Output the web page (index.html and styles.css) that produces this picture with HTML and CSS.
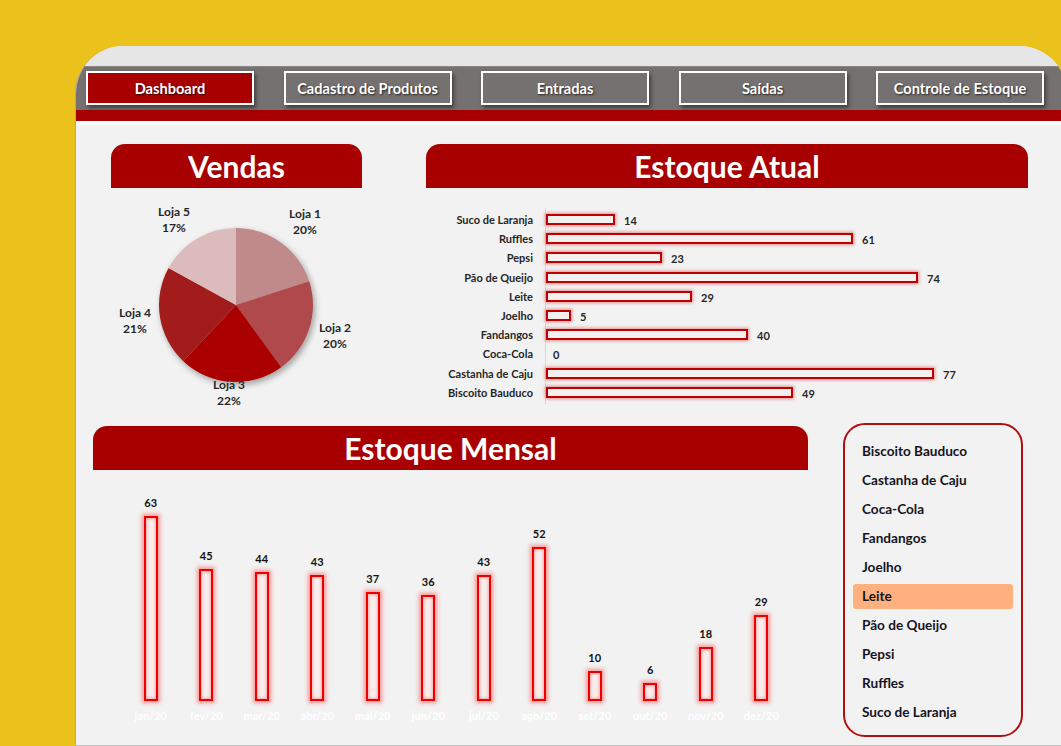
FILE: index.html
```html
<!DOCTYPE html>
<html lang="pt-BR">
<head>
<meta charset="utf-8">
<title>Dashboard</title>
<link rel="stylesheet" href="styles.css">
</head>
<body>
<div class="card">
  <div class="topstrip"></div>
  <nav class="nav">
    <div class="btn active">Dashboard</div>
    <div class="btn">Cadastro de Produtos</div>
    <div class="btn">Entradas</div>
    <div class="btn">Saídas</div>
    <div class="btn">Controle de Estoque</div>
  </nav>
  <div class="redstrip"></div>
  <main class="content">
    <div class="row1">
      <section class="panel vendas">
        <h2 class="title">Vendas</h2>
        <svg class="pie" width="251" height="230" viewBox="0 0 251 230">
          <defs>
            <filter id="sh" x="-20%" y="-20%" width="140%" height="140%">
              <feDropShadow dx="2" dy="3" stdDeviation="3" flood-color="#000" flood-opacity="0.35"/>
            </filter>
          </defs>
          <g filter="url(#sh)">
            <path d="M125,117 L125,40 A77,77 0 0 1 198.23,93.21 Z" fill="#c08a8a"/>
            <path d="M125,117 L198.23,93.21 A77,77 0 0 1 170.26,179.29 Z" fill="#b04a4b"/>
            <path d="M125,117 L170.26,179.29 A77,77 0 0 1 72.29,173.13 Z" fill="#aa0000"/>
            <path d="M125,117 L72.29,173.13 A77,77 0 0 1 57.52,79.90 Z" fill="#a31c1c"/>
            <path d="M125,117 L57.52,79.90 A77,77 0 0 1 125,40 Z" fill="#dbbbbc"/>
          </g>
          <g class="pielbl">
            <text x="194" y="30">Loja 1</text><text x="194" y="46">20%</text>
            <text x="224" y="144">Loja 2</text><text x="224" y="160">20%</text>
            <text x="118" y="201">Loja 3</text><text x="118" y="217">22%</text>
            <text x="24" y="129">Loja 4</text><text x="24" y="145">21%</text>
            <text x="63" y="28">Loja 5</text><text x="63" y="44">17%</text>
          </g>
        </svg>
      </section>
      <section class="panel atual">
        <h2 class="title">Estoque Atual</h2>
        <div class="hchart">
          <div class="hlabels">
            <div class="hl">Suco de Laranja</div>
            <div class="hl">Ruffles</div>
            <div class="hl">Pepsi</div>
            <div class="hl">Pão de Queijo</div>
            <div class="hl">Leite</div>
            <div class="hl">Joelho</div>
            <div class="hl">Fandangos</div>
            <div class="hl">Coca-Cola</div>
            <div class="hl">Castanha de Caju</div>
            <div class="hl">Biscoito Bauduco</div>
          </div>
          <div class="hbars">
            <div class="hrow"><div class="hbar" style="width:69px"></div><span class="hv">14</span></div>
            <div class="hrow"><div class="hbar" style="width:307px"></div><span class="hv">61</span></div>
            <div class="hrow"><div class="hbar" style="width:116px"></div><span class="hv">23</span></div>
            <div class="hrow"><div class="hbar" style="width:372px"></div><span class="hv">74</span></div>
            <div class="hrow"><div class="hbar" style="width:146px"></div><span class="hv">29</span></div>
            <div class="hrow"><div class="hbar" style="width:25px"></div><span class="hv">5</span></div>
            <div class="hrow"><div class="hbar" style="width:202px"></div><span class="hv">40</span></div>
            <div class="hrow"><span class="hv zero">0</span></div>
            <div class="hrow"><div class="hbar" style="width:388px"></div><span class="hv">77</span></div>
            <div class="hrow"><div class="hbar" style="width:247px"></div><span class="hv">49</span></div>
          </div>
        </div>
      </section>
    </div>
    <div class="row2">
      <section class="panel mensal">
        <h2 class="title">Estoque Mensal</h2>
        <div class="mplot">
          <div class="mcol"><span class="mv">63</span><div class="vbar" style="height:185px"></div><span class="mm">jan/20</span></div>
          <div class="mcol"><span class="mv">45</span><div class="vbar" style="height:132px"></div><span class="mm">fev/20</span></div>
          <div class="mcol"><span class="mv">44</span><div class="vbar" style="height:129px"></div><span class="mm">mar/20</span></div>
          <div class="mcol"><span class="mv">43</span><div class="vbar" style="height:126px"></div><span class="mm">abr/20</span></div>
          <div class="mcol"><span class="mv">37</span><div class="vbar" style="height:109px"></div><span class="mm">mai/20</span></div>
          <div class="mcol"><span class="mv">36</span><div class="vbar" style="height:106px"></div><span class="mm">jun/20</span></div>
          <div class="mcol"><span class="mv">43</span><div class="vbar" style="height:126px"></div><span class="mm">jul/20</span></div>
          <div class="mcol"><span class="mv">52</span><div class="vbar" style="height:154px"></div><span class="mm">ago/20</span></div>
          <div class="mcol"><span class="mv">10</span><div class="vbar" style="height:30px"></div><span class="mm">set/20</span></div>
          <div class="mcol"><span class="mv">6</span><div class="vbar" style="height:18px"></div><span class="mm">out/20</span></div>
          <div class="mcol"><span class="mv">18</span><div class="vbar" style="height:54px"></div><span class="mm">nov/20</span></div>
          <div class="mcol"><span class="mv">29</span><div class="vbar" style="height:86px"></div><span class="mm">dez/20</span></div>
        </div>
      </section>
      <ul class="list">
        <li>Biscoito Bauduco</li>
        <li>Castanha de Caju</li>
        <li>Coca-Cola</li>
        <li>Fandangos</li>
        <li>Joelho</li>
        <li class="sel">Leite</li>
        <li>Pão de Queijo</li>
        <li>Pepsi</li>
        <li>Ruffles</li>
        <li>Suco de Laranja</li>
      </ul>
    </div>
  </main>
</div>
</body>
</html>
```

FILE: styles.css
```css
html, body {
  margin: 0;
  padding: 0;
}
body {
  background: #ebc11c;
  overflow: hidden;
  width: 1061px;
  height: 746px;
  font-family: Lato, "Open Sans", sans-serif;
}
.card {
  margin: 46px 0 0 75px;
  width: 992px;
  height: 700px;
  box-sizing: border-box;
  background: #f2f2f2;
  border-left: 1px solid #a6a6a6;
  border-bottom: 1px solid #bfbfbf;
  border-radius: 48px 48px 0 0;
  overflow: hidden;
}
.topstrip {
  height: 20px;
  background: #e7e6e6;
}
.nav {
  height: 44px;
  box-sizing: border-box;
  background: #767171;
  border-top: 1px solid #8a8585;
  display: flex;
  gap: 29.5px;
  padding: 4px 0 0 10px;
}
.btn {
  width: 168px;
  height: 34px;
  box-sizing: border-box;
  border: 2px solid #ffffff;
  color: #ffffff;
  font-weight: 700;
  font-size: 14.6px;
  display: flex;
  align-items: center;
  justify-content: center;
  text-shadow: 1px 1px 2px rgba(0, 0, 0, 0.7);
  box-shadow: 2px 3px 4px rgba(0, 0, 0, 0.45);
  flex: none;
}
.btn.active {
  background: #a80000;
}
.redstrip {
  height: 11px;
  background: #a80000;
  border-bottom: 4px solid #ffffff;
}
.content {
  padding-top: 19px;
}
.row1 {
  display: flex;
  gap: 64px;
  padding-left: 35px;
  height: 279px;
}
.panel {
  flex: none;
}
.title {
  margin: 0;
  height: 44px;
  line-height: 44px;
  background: #a80000;
  color: #ffffff;
  font-size: 30px;
  font-weight: 700;
  text-align: center;
  border-radius: 14px 14px 0 0;
}
.vendas {
  width: 251px;
}
.pie {
  display: block;
}
.pielbl text {
  font-family: Lato, "Open Sans", sans-serif;
  font-size: 12px;
  font-weight: 700;
  fill: #262626;
  text-anchor: middle;
}
.atual {
  width: 602px;
}
.hchart {
  display: flex;
  padding-top: 22px;
}
.hlabels {
  width: 107px;
  padding-right: 12px;
}
.hl {
  height: 19.2px;
  line-height: 19.2px;
  font-size: 11px;
  font-weight: 700;
  color: #262626;
  text-align: right;
  white-space: nowrap;
}
.hbars {
  border-left: 1px solid #d9d9d9;
  margin-top: -2px;
  padding-top: 2px;
  padding-bottom: 2px;
  margin-bottom: -2px;
}
.hrow {
  height: 19.2px;
  display: flex;
  align-items: center;
}
.hbar {
  height: 11px;
  box-sizing: border-box;
  border: 2px solid #c00000;
  background: #f4f0f0;
  box-shadow: 0 0 3px 1px rgba(214, 60, 60, 0.55);
}
.hv {
  margin-left: 9px;
  font-size: 11px;
  font-weight: 700;
  color: #262626;
  padding-top: 2px;
}
.hv.zero {
  margin-left: 7px;
}
.row2 {
  display: flex;
  gap: 35px;
  padding-left: 17px;
}
.mensal {
  width: 715px;
  margin-top: 3px;
}
.mplot {
  height: 260px;
  box-sizing: border-box;
  display: flex;
  padding: 0 0 7px 30px;
}
.mcol {
  width: 55.5px;
  display: flex;
  flex-direction: column;
  align-items: center;
  justify-content: flex-end;
}
.mv {
  font-size: 11px;
  font-weight: 700;
  line-height: 13px;
  margin-bottom: 7px;
  color: #111111;
}
.vbar {
  width: 14px;
  box-sizing: border-box;
  border: 2px solid #ee0000;
  background: #f7eeee;
  box-shadow: 0 0 4px 2px rgba(255, 40, 40, 0.45), inset 0 0 3px 1px rgba(255, 80, 80, 0.45);
}
.mm {
  margin-top: 8px;
  line-height: 14px;
  font-size: 11px;
  font-weight: 700;
  color: #ffffff;
  white-space: nowrap;
}
.list {
  list-style: none;
  margin: 0;
  width: 180px;
  height: 314px;
  box-sizing: border-box;
  border: 2px solid #b01010;
  border-radius: 22px;
  padding: 14px 8px 0 8px;
  display: flex;
  flex-direction: column;
  gap: 4px;
}
.list li {
  height: 25px;
  line-height: 25px;
  padding-left: 9px;
  font-size: 13.6px;
  font-weight: 700;
  color: #15151f;
  border-radius: 3px;
}
.list li.sel {
  background: #ffb07f;
}
```
